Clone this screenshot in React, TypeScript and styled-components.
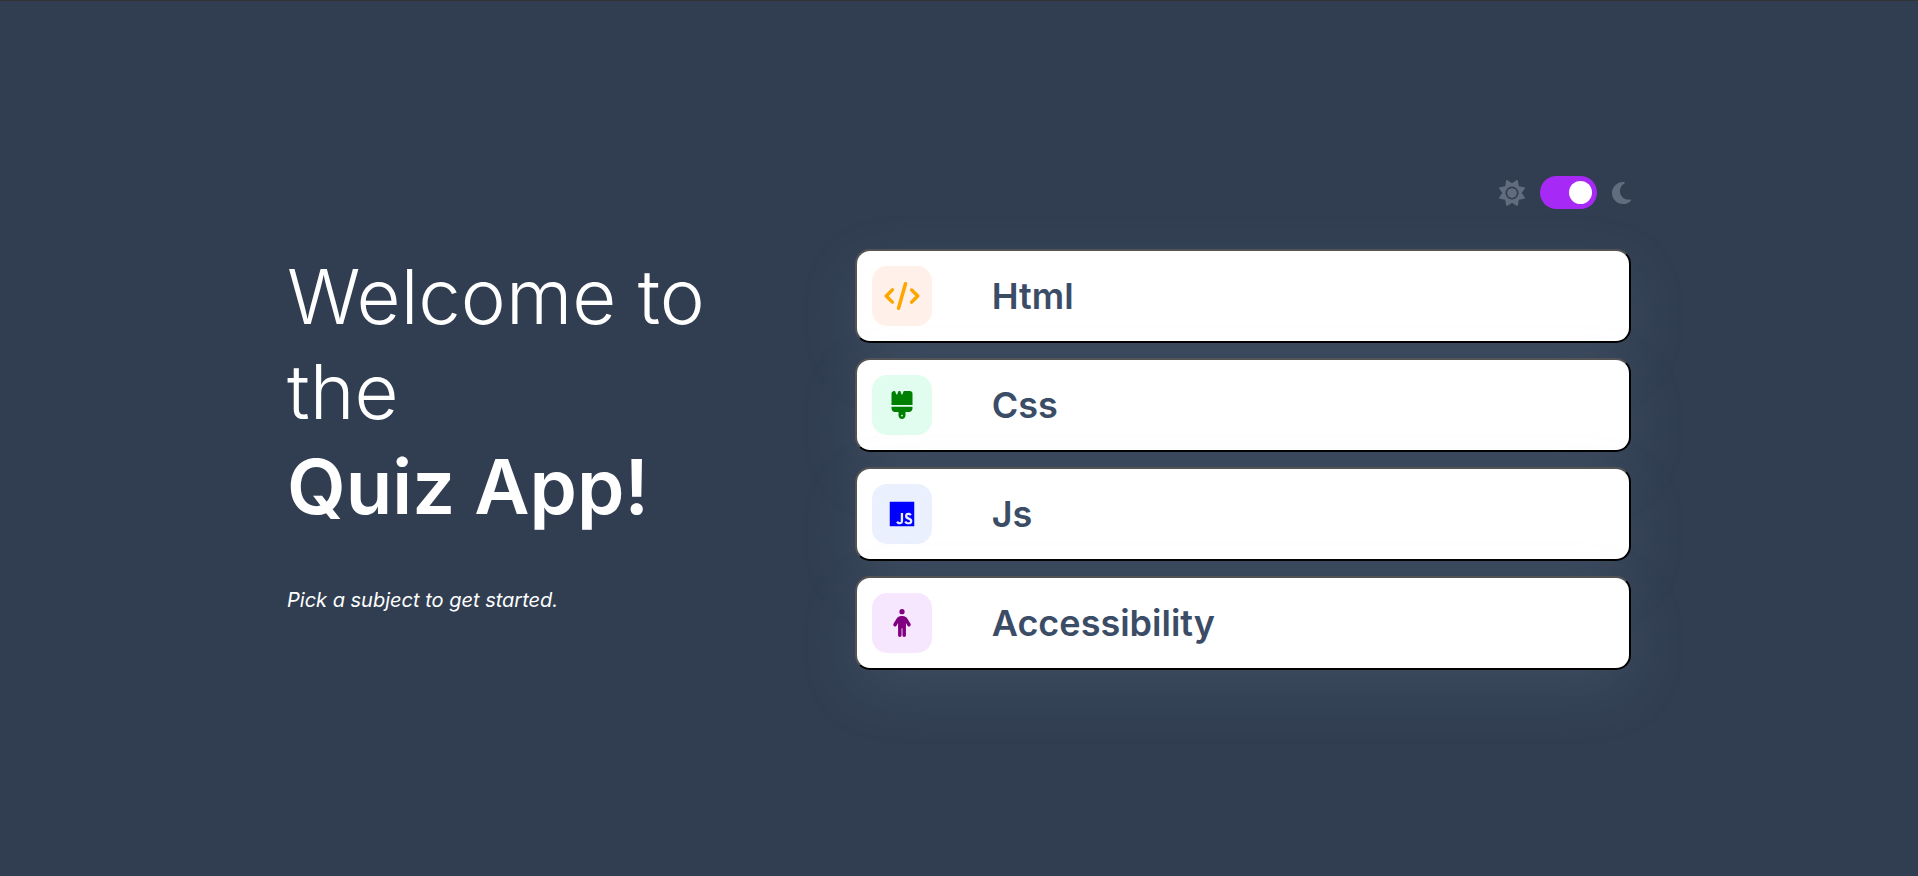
import React, { useState } from 'react';
import styled, { createGlobalStyle } from 'styled-components';
import type { IconType } from 'react-icons';
import { FaBrush, FaCode, FaJs, FaMoon, FaPerson, FaSun } from 'react-icons/fa6';

const GlobalStyle = createGlobalStyle`
  *, *::before, *::after {
    box-sizing: border-box;
  }
  body {
    margin: 0;
    background: #313e51;
    color: #ffffff;
    font-family: Inter, Roboto, sans-serif;
  }
`;

const Page = styled.main`
  min-height: 100vh;
  padding: 175px 0 60px;
  border-top: 1px solid #333333;
`;

const Layout = styled.div`
  display: grid;
  grid-template-columns: 38fr 62fr;
  grid-template-areas:
    '. theme'
    'intro subjects';
  gap: 40px 92px;
  width: min(1344px, 90%);
  margin: 0 auto;

  @media (max-width: 1200px) {
    grid-template-columns: 1fr;
    grid-template-areas: 'theme' 'intro' 'subjects';
  }
`;

const ThemeSwitch = styled.label`
  grid-area: theme;
  justify-self: end;
  display: flex;
  align-items: center;
  gap: 15px;
  color: #626c7f;
  cursor: pointer;
`;

const SunIcon = styled(FaSun)`
  width: 26px;
  height: 26px;
`;

const MoonIcon = styled(FaMoon)`
  width: 19px;
  height: 26px;
`;

const Toggle = styled.input`
  appearance: none;
  display: flex;
  width: 57px;
  height: 33px;
  margin: 0;
  padding: 5px;
  border-radius: 17px;
  background: #a729f5;
  cursor: pointer;

  &::before {
    content: '';
    width: 23px;
    height: 23px;
    border-radius: 50%;
    background: #ffffff;
  }
  &:checked {
    justify-content: flex-end;
  }
`;

const Intro = styled.section`
  grid-area: intro;
`;

const Title = styled.h1`
  margin: 0;
  font-size: 76px;
  line-height: 95px;
  font-weight: 300;

  strong {
    display: block;
    font-weight: 600;
  }
`;

const Hint = styled.p`
  margin: 54px 0 0;
  font-size: 20px;
  line-height: 24px;
  font-style: italic;
`;

const SubjectList = styled.div`
  grid-area: subjects;
  display: flex;
  flex-direction: column;
  gap: 15px;
`;

const SubjectButton = styled.button`
  display: flex;
  align-items: center;
  gap: 60px;
  padding: 15px;
  border: 2px outset #000000;
  border-radius: 15px;
  background: #ffffff;
  box-shadow: 0 20px 60px rgba(143, 160, 193, 0.14);
  color: #3b4d66;
  font-family: inherit;
  font-size: 36px;
  line-height: 44px;
  font-weight: 600;
  text-align: left;
  cursor: pointer;
`;

const IconTile = styled.span<{ $color: string; $background: string }>`
  display: flex;
  align-items: center;
  justify-content: center;
  width: 60px;
  height: 60px;
  border-radius: 15px;
  background: ${(p) => p.$background};
  color: ${(p) => p.$color};

  svg {
    width: 36px;
    height: 28px;
  }
`;

interface Subject {
  name: string;
  icon: IconType;
  color: string;
  background: string;
}

const subjects: Subject[] = [
  { name: 'Html', icon: FaCode, color: 'orange', background: '#fff1e9' },
  { name: 'Css', icon: FaBrush, color: 'green', background: '#e0fdef' },
  { name: 'Js', icon: FaJs, color: 'blue', background: '#ebf0ff' },
  { name: 'Accessibility', icon: FaPerson, color: 'purple', background: '#f6e7ff' },
];

export default function App() {
  const [dark, setDark] = useState(true);

  return (
    <>
      <GlobalStyle />
      <Page>
        <Layout>
          <ThemeSwitch>
            <SunIcon aria-hidden />
            <Toggle
              type="checkbox"
              aria-label="Dark mode"
              checked={dark}
              onChange={(e) => setDark(e.target.checked)}
            />
            <MoonIcon aria-hidden />
          </ThemeSwitch>
          <Intro>
            <Title>
              Welcome to <br />
              the <strong>Quiz App!</strong>
            </Title>
            <Hint>Pick a subject to get started.</Hint>
          </Intro>
          <SubjectList>
            {subjects.map(({ name, icon: Icon, color, background }) => (
              <SubjectButton key={name} type="button">
                <IconTile $color={color} $background={background}>
                  <Icon aria-hidden />
                </IconTile>
                {name}
              </SubjectButton>
            ))}
          </SubjectList>
        </Layout>
      </Page>
    </>
  );
}
